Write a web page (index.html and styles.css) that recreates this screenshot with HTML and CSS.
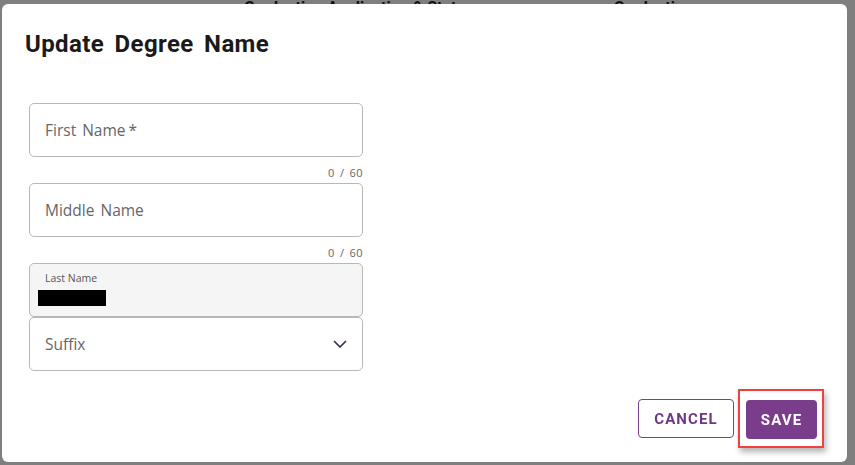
FILE: index.html
```html
<!DOCTYPE html>
<html lang="en">
<head>
<meta charset="utf-8">
<title>Update Degree Name</title>
<link rel="stylesheet" href="styles.css">
</head>
<body>
<div class="page">
  <div class="page-head">
    <span class="bg-title bg-title-1">Graduation Application &amp; Status</span>
    <span class="bg-title bg-title-2">Graduation</span>
  </div>
</div>
<div class="backdrop"></div>
<div class="dialog" role="dialog" aria-labelledby="dlg-title">
  <h2 class="dialog-title" id="dlg-title">Update Degree Name</h2>
  <div class="form">
    <div class="field">
      <div class="input"><span class="placeholder">First Name<span class="req">*</span></span></div>
      <div class="counter">0 / 60</div>
    </div>
    <div class="field">
      <div class="input"><span class="placeholder">Middle Name</span></div>
      <div class="counter">0 / 60</div>
    </div>
    <div class="input input-filled">
      <span class="small-label">Last Name</span>
      <span class="redacted"></span>
    </div>
    <div class="input input-select">
      <span class="placeholder">Suffix</span>
      <svg class="chevron" width="14" height="9" viewBox="0 0 14 9" aria-hidden="true">
        <path d="M1.5 1.5 L7 7 L12.5 1.5" fill="none" stroke="#3d2a4a" stroke-width="1.7" stroke-linecap="round" stroke-linejoin="round"/>
      </svg>
    </div>
  </div>
  <div class="actions">
    <button class="btn btn-outline" type="button">CANCEL</button>
    <div class="highlight">
      <button class="btn btn-primary" type="button">SAVE</button>
    </div>
  </div>
</div>
</body>
</html>
```
FILE: styles.css
```css
* { box-sizing: border-box; }
html, body {
  margin: 0;
  padding: 0;
  width: 855px;
  height: 465px;
  overflow: hidden;
  font-family: "Open Sans", "Liberation Sans", sans-serif;
  background: #ffffff;
}
.page {
  height: 465px;
  background: #ffffff;
}
.page-head {
  display: flex;
  height: 20px;
  padding-top: 0;
}
.bg-title {
  font-family: Roboto, sans-serif;
  font-weight: 700;
  font-size: 16px;
  line-height: 16px;
  color: #222;
}
.bg-title-1 { margin-left: 244px; }
.bg-title-2 { margin-left: 140px; }
.backdrop {
  position: fixed;
  inset: 0;
  background: rgba(0, 0, 0, 0.5);
}
.dialog {
  position: fixed;
  left: 2px;
  top: 4px;
  width: 845px;
  height: 458px;
  background: #ffffff;
  border-radius: 6px;
  display: flex;
  flex-direction: column;
}
.dialog-title {
  margin: 0;
  padding: 26px 0 0 23px;
  height: 60px;
  font-family: Roboto, "Liberation Sans", sans-serif;
  font-weight: 700;
  font-size: 24px;
  letter-spacing: 0.4px;
  word-spacing: 4px;
  color: #1a1a1a;
  line-height: 28px;
}
.form {
  margin: 39px 0 0 27px;
  width: 334px;
  display: flex;
  flex-direction: column;
}
.input {
  height: 54px;
  border: 1px solid #b8b8b8;
  border-radius: 5px;
  background: #ffffff;
  padding: 0 15px;
  display: flex;
  align-items: center;
}
.placeholder {
  font-size: 15.5px;
  color: #666666;
  word-spacing: 2px;
}
.req { margin-left: 3px; }
.counter {
  height: 26px;
  padding-top: 9px;
  text-align: right;
  font-size: 11px;
  line-height: 14px;
  color: #666666;
  letter-spacing: 0.4px;
  word-spacing: 2px;
}
.input-filled {
  background: #f5f5f5;
  flex-direction: column;
  align-items: flex-start;
  justify-content: flex-start;
  padding: 7px 15px 0 8px;
}
.small-label {
  font-size: 10.5px;
  color: #555555;
  line-height: 14px;
  padding-left: 7px;
}
.redacted {
  display: block;
  width: 68px;
  height: 16px;
  background: #000000;
  margin-top: 5px;
}
.input-select {
  justify-content: space-between;
  padding-right: 15px;
}
.chevron { display: block; }
.actions {
  margin-top: auto;
  margin-bottom: 14px;
  display: flex;
  justify-content: flex-end;
  align-items: center;
  gap: 4px;
  padding-right: 23px;
}
.btn {
  height: 39px;
  border-radius: 4px;
  font-family: Roboto, "Liberation Sans", sans-serif;
  font-weight: 700;
  font-size: 15px;
  letter-spacing: 1.1px;
  cursor: pointer;
}
.btn-outline {
  width: 96px;
  background: #ffffff;
  border: 1px solid #7b3f8e;
  color: #6d3a80;
}
.btn-primary {
  width: 71px;
  background: #7a3d8c;
  border: none;
  color: #ffffff;
}
.highlight {
  border: 2.5px solid #f0403f;
  padding: 9px 5px 7px 6px;
  box-shadow: 2px 4px 6px rgba(0, 0, 0, 0.3);
}
```
